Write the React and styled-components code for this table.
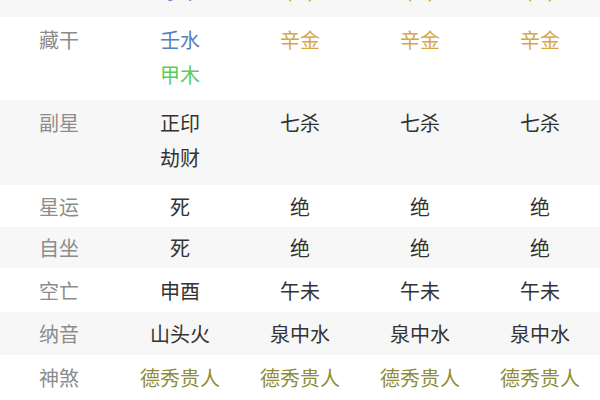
import React from 'react'
import styled, { createGlobalStyle } from 'styled-components'

const GlobalStyle = createGlobalStyle`
    html, body {
        margin: 0;
        padding: 0;
        background: #fff;
    }
    body {
        font-family: "Noto Sans CJK SC", "Noto Sans", sans-serif;
        overflow: hidden;
    }
`

const colors = {
    water: '#5480c2',
    wood: '#5ccb5a',
    metal: '#d8a546',
    star: '#8e8d3a',
    text: '#333',
    label: '#8c8c8c'
}

const Table = styled.div`
    width: 600px;
    display: flex;
    flex-direction: column;
`

const Row = styled.div`
    display: grid;
    grid-template-columns: repeat(5, 120px);
    align-items: center;
    height: ${ (props) => props.height }px;
    background-color: ${ (props) => props.shade ? '#f7f7f7' : '#fff' };
    overflow: hidden;
`

// only the bottom edge of the branch row is still on screen
const TopRow = styled(Row)`
    align-items: start;
`

const Branch = styled.div`
    margin-top: -27px;
    font-size: 28px;
    line-height: 28px;
    text-align: center;
    color: ${ (props) => props.color };
`

const Label = styled.div`
    font-size: 20px;
    line-height: 35px;
    color: ${colors.label};
    text-align: center;
    padding-right: 2px;
    align-self: ${ (props) => props.top ? 'start' : 'center' };
    padding-top: ${ (props) => props.top ? '5px' : '0' };
`

const Cell = styled.div`
    display: flex;
    flex-direction: column;
    align-items: center;
    align-self: ${ (props) => props.top ? 'start' : 'center' };
    padding-top: ${ (props) => props.top ? '5px' : '0' };
    font-size: 20px;
    line-height: 35px;
    color: ${colors.text};
`

const Word = styled.span`
    color: ${ (props) => props.color || 'inherit' };
`

const rows = [
    {
        label: '藏干',
        height: 83,
        top: true,
        cells: [
            [['壬水', colors.water], ['甲木', colors.wood]],
            [['辛金', colors.metal]],
            [['辛金', colors.metal]],
            [['辛金', colors.metal]]
        ]
    },
    {
        label: '副星',
        height: 85,
        top: true,
        shade: true,
        cells: [[['正印'], ['劫财']], [['七杀']], [['七杀']], [['七杀']]]
    },
    { label: '星运', height: 42, cells: [[['死']], [['绝']], [['绝']], [['绝']]] },
    { label: '自坐', height: 41, shade: true, cells: [[['死']], [['绝']], [['绝']], [['绝']]] },
    { label: '空亡', height: 44, cells: [[['申酉']], [['午未']], [['午未']], [['午未']]] },
    { label: '纳音', height: 43, shade: true, cells: [[['山头火']], [['泉中水']], [['泉中水']], [['泉中水']]] },
    {
        label: '神煞',
        height: 45,
        cells: [
            [['德秀贵人', colors.star]],
            [['德秀贵人', colors.star]],
            [['德秀贵人', colors.star]],
            [['德秀贵人', colors.star]]
        ]
    }
]

const branches = [
    ['亥', colors.water],
    ['酉', colors.metal],
    ['酉', colors.metal],
    ['酉', colors.metal]
]

function App() {
    return (
        <>
            <GlobalStyle />
            <Table>
                <TopRow height={17} shade>
                    <div />
                    { branches.map(([ch, color], i) => (
                        <Branch key={i} color={color}>{ch}</Branch>
                    )) }
                </TopRow>
                { rows.map((row) => (
                    <Row key={row.label} height={row.height} shade={row.shade}>
                        <Label top={row.top}>{row.label}</Label>
                        { row.cells.map((words, i) => (
                            <Cell key={i} top={row.top}>
                                { words.map(([text, color]) => (
                                    <Word key={text} color={color}>{text}</Word>
                                )) }
                            </Cell>
                        )) }
                    </Row>
                )) }
            </Table>
        </>
    )
}

export default App
